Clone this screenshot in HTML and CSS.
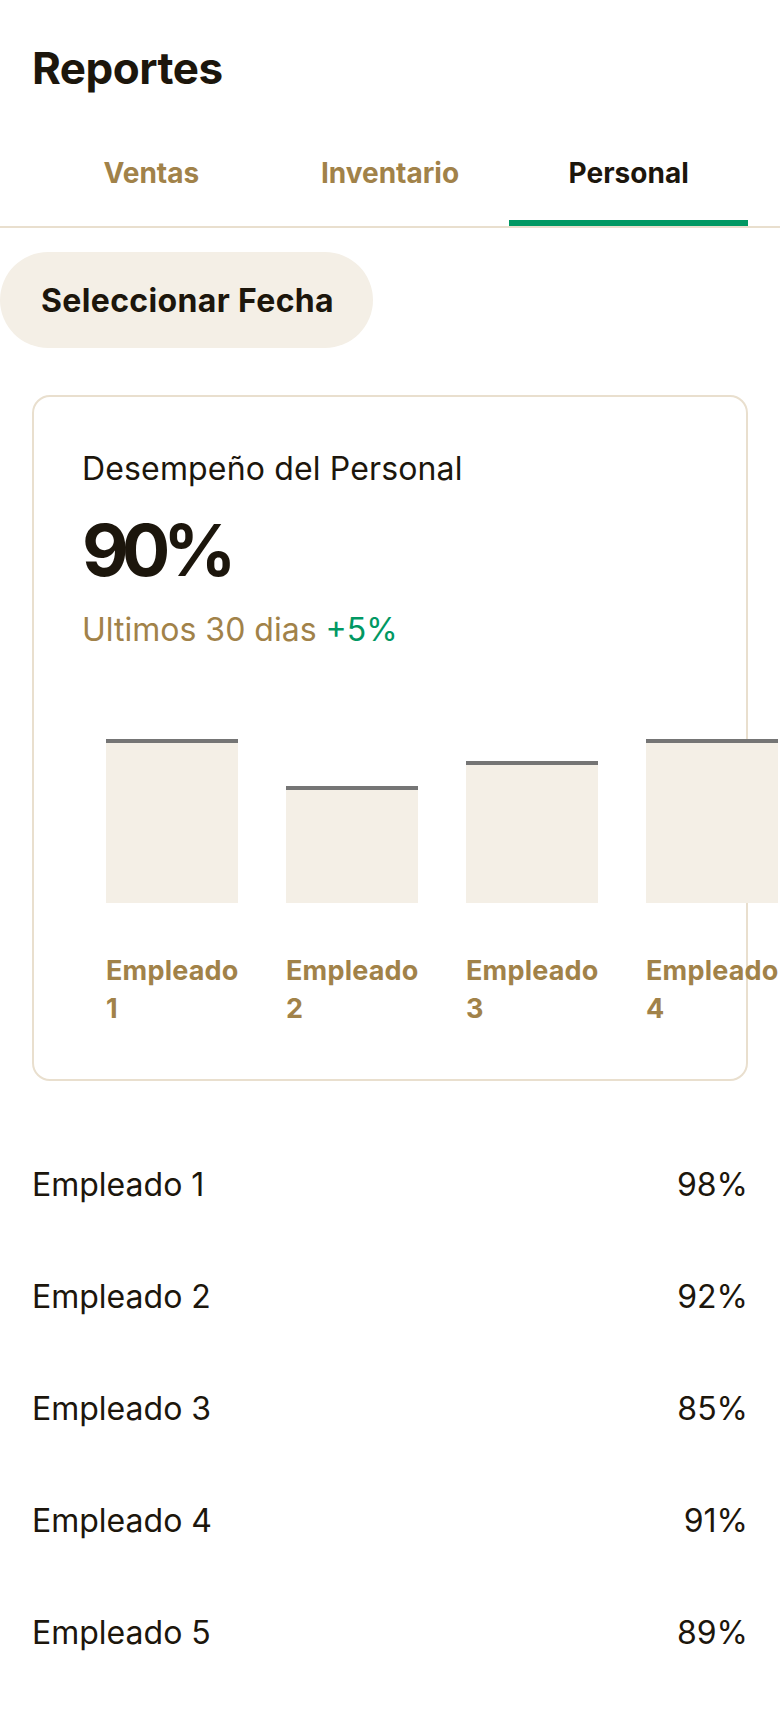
FILE: index.html
```html
<!DOCTYPE html>
<html lang="es">
<head>
<meta charset="utf-8">
<title>Reportes</title>
<link rel="stylesheet" href="styles.css">
</head>
<body>
<div class="page">
  <header class="header">
    <h1 class="title">Reportes</h1>
  </header>
  <nav class="tabs">
    <a class="tab">Ventas</a>
    <a class="tab">Inventario</a>
    <a class="tab active">Personal</a>
  </nav>
  <div class="actions">
    <button class="date-btn">Seleccionar Fecha</button>
  </div>
  <section class="card">
    <p class="card-label">Desempeño del Personal</p>
    <p class="card-value">90%</p>
    <p class="card-sub">Ultimos 30 dias <span class="up">+5%</span></p>
    <div class="chart">
      <div class="col">
        <div class="bar-area"><div class="bar" style="height:164px"></div></div>
        <p class="bar-label">Empleado 1</p>
      </div>
      <div class="col">
        <div class="bar-area"><div class="bar" style="height:117px"></div></div>
        <p class="bar-label">Empleado 2</p>
      </div>
      <div class="col">
        <div class="bar-area"><div class="bar" style="height:142px"></div></div>
        <p class="bar-label">Empleado 3</p>
      </div>
      <div class="col">
        <div class="bar-area"><div class="bar" style="height:164px"></div></div>
        <p class="bar-label">Empleado 4</p>
      </div>
    </div>
  </section>
  <ul class="list">
    <li class="row"><span>Empleado 1</span><span>98%</span></li>
    <li class="row"><span>Empleado 2</span><span>92%</span></li>
    <li class="row"><span>Empleado 3</span><span>85%</span></li>
    <li class="row"><span>Empleado 4</span><span>91%</span></li>
    <li class="row"><span>Empleado 5</span><span>89%</span></li>
  </ul>
</div>
</body>
</html>
```
FILE: styles.css
```css
* { box-sizing: border-box; }
html, body { margin: 0; padding: 0; background: #ffffff; }
body {
  font-family: "Inter", "Noto Sans", "Liberation Sans", sans-serif;
  color: #1c160c;
  width: 780px;
  overflow-x: hidden;
}
.page { width: 780px; overflow: hidden; }
p { margin: 0; }

.header { padding: 40px 32px 24px; }
.title {
  margin: 0;
  font-size: 44px;
  line-height: 56px;
  font-weight: 700;
  letter-spacing: -0.5px;
  color: #1c160c;
}

.tabs {
  display: flex;
  padding: 0 32px;
  border-bottom: 2px solid #e9dfce;
}
.tab {
  flex: 1;
  display: flex;
  justify-content: center;
  padding: 32px 0 26px;
  border-bottom: 6px solid transparent;
  font-size: 28px;
  line-height: 42px;
  font-weight: 700;
  color: #a18249;
}
.tab.active { color: #1c160c; border-bottom-color: #019863; }

.actions { padding: 24px 0 0; }
.date-btn {
  height: 96px;
  width: 373px;
  border: none;
  border-radius: 48px;
  background: #f4efe6;
  padding: 0 0 0 41px;
  text-align: left;
  font-family: inherit;
  font-size: 32px;
  font-weight: 700;
  color: #1c160c;
  letter-spacing: 0.35px;
}

.card {
  margin: 47px 32px 0;
  border: 2px solid #e9dfce;
  border-radius: 18px;
  padding: 48px 48px 51px;
}
.card-label { font-size: 32px; line-height: 48px; letter-spacing: 0.15px; color: #1c160c; }
.card-value {
  margin-top: 12px;
  font-size: 72px;
  line-height: 90px;
  font-weight: 700;
  letter-spacing: -7px;
}
.card-sub { margin-top: 11px; font-size: 32px; line-height: 48px; color: #a18249; }
.up { color: #019863; }

.chart {
  display: flex;
  gap: 48px;
  margin-top: 85px;
  padding-left: 24px;
  width: 800px;
}
.col { width: 132px; flex: none; }
.bar-area {
  height: 164px;
  display: flex;
  align-items: flex-end;
}
.bar {
  width: 100%;
  background: #f4efe6;
  border-top: 4px solid #757575;
}
.bar-label {
  margin-top: 49px;
  font-size: 27px;
  line-height: 38px;
  font-weight: 700;
  letter-spacing: 0.2px;
  color: #a18249;
}

.list { list-style: none; margin: 47px 0 0; padding: 0 32px; }
.row {
  height: 112px;
  display: flex;
  align-items: center;
  justify-content: space-between;
  font-size: 32px;
  color: #1c160c;
}
```
